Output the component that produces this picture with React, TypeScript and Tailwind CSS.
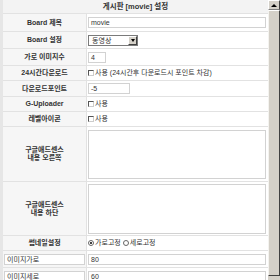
import React from 'react';

const font = { fontFamily: '"Liberation Sans", "Noto Sans CJK KR", sans-serif' };

function Label({ children }: { children: React.ReactNode }) {
  return (
    <div className="bg-[#f6f6f6] flex items-center justify-center text-center font-bold text-[7px] leading-[8px] text-[#333]">
      {children}
    </div>
  );
}

function Cell({ children, className = '' }: { children?: React.ReactNode; className?: string }) {
  return <div className={`bg-white flex items-center pl-[1px] pr-[2px] text-[7px] text-[#333] ${className}`}>{children}</div>;
}

function TextBox({ value, className = '' }: { value: string; className?: string }) {
  return (
    <div className={`h-[11px] border border-[#d2d2d2] bg-white pl-[2px] flex items-center text-[7px] leading-none text-[#333] ${className}`}>
      {value}
    </div>
  );
}

function Check({ text }: { text: string }) {
  return (
    <div className="flex items-center gap-[1px]">
      <span className="w-[6px] h-[6px] border border-t-[#555] border-l-[#555] border-r-[#ccc] border-b-[#ccc] bg-white" />
      <span>{text}</span>
    </div>
  );
}

function Radio({ checked, text }: { checked?: boolean; text: string }) {
  return (
    <div className="flex items-center gap-[1px]">
      <span className="w-[6px] h-[6px] rounded-full border border-[#666] bg-white flex items-center justify-center">
        {checked && <span className="w-[2px] h-[2px] rounded-full bg-black" />}
      </span>
      <span>{text}</span>
    </div>
  );
}

export default function App() {
  return (
    <div className="w-[280px] h-[280px] overflow-hidden flex bg-[#e6e6e6]" style={font}>
      <div className="flex-1 pl-[3px]">
        <div className="grid grid-cols-[83px_1fr] gap-[1px] bg-[#e2e2e2]">
          <div className="col-span-2 h-[13px] bg-[#f3f3f3] flex items-center justify-center font-bold text-[7.5px] text-[#333]">
            게시판 [movie] 설정
          </div>

          <div className="contents">
            <Label>Board 제목</Label>
            <Cell className="h-[17px]"><TextBox value="movie" className="w-full" /></Cell>
          </div>

          <Label>Board 설정</Label>
          <Cell className="h-[16px]">
            <div className="w-[50px] h-[11px] border border-[#7a7a7a] bg-white flex items-center justify-between">
              <span className="pl-[3px] text-[7px] leading-none">동영상</span>
              <span className="w-[9px] h-[9px] bg-[#d4d0c8] border border-t-white border-l-white border-r-[#404040] border-b-[#404040] flex items-center justify-center">
                <span className="w-0 h-0 border-l-[2.5px] border-r-[2.5px] border-t-[3px] border-l-transparent border-r-transparent border-t-black" />
              </span>
            </div>
          </Cell>

          <Label>가로 이미지수</Label>
          <Cell className="h-[16px]"><TextBox value="4" className="w-[18px]" /></Cell>

          <Label>24시간다운로드</Label>
          <Cell className="h-[14px]"><Check text="사용 (24시간후 다운로드시 포인트 차감)" /></Cell>

          <Label>다운로드포인트</Label>
          <Cell className="h-[15px]"><TextBox value="-5" className="w-[42px]" /></Cell>

          <Label>G-Uploader</Label>
          <Cell className="h-[14px]"><Check text="사용" /></Cell>

          <Label>레벨아이콘</Label>
          <Cell className="h-[14px]"><Check text="사용" /></Cell>

          <Label>구글애드센스<br />내용 오른쪽</Label>
          <Cell className="h-[54px]"><div className="w-full h-[49px] border border-[#d2d2d2] bg-white" /></Cell>

          <Label>구글애드센스<br />내용 하단</Label>
          <Cell className="h-[53px]"><div className="w-full h-[50px] border border-[#d2d2d2] bg-white" /></Cell>

          <Label>썸네일설정</Label>
          <Cell className="h-[14px] gap-[2px]">
            <Radio checked text="가로고정" />
            <Radio text="세로고정" />
          </Cell>

          <div className="bg-[#f6f6f6] flex items-center pl-[1px] pr-[1px]">
            <TextBox value="이미지가로" className="w-full" />
          </div>
          <Cell className="h-[16px]"><TextBox value="80" className="w-full" /></Cell>

          <div className="bg-[#f6f6f6] flex items-center pl-[1px] pr-[1px]">
            <TextBox value="이미지세로" className="w-full" />
          </div>
          <Cell className="h-[16px]"><TextBox value="60" className="w-full" /></Cell>
        </div>
      </div>

      <div className="w-[12px] h-full flex flex-col bg-[#d4d0c8]">
        <div className="h-[10px] border border-t-white border-l-white border-r-[#404040] border-b-[#808080] flex items-center justify-center">
          <span className="w-0 h-0 border-l-[3px] border-r-[3px] border-b-[3px] border-l-transparent border-r-transparent border-b-black" />
        </div>
        <div className="flex-1 mb-[4px] border border-t-white border-l-[#f4f3ef] border-r-[#404040] border-b-[#404040]" />
      </div>
    </div>
  );
}
